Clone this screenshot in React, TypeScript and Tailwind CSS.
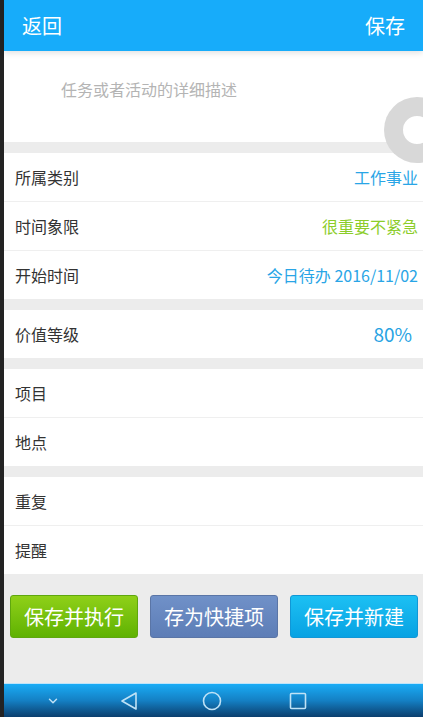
import { ChevronDown } from "lucide-react";

const font = { fontFamily: '"Noto Sans CJK SC", "Noto Sans", sans-serif' };

type Row = { label: string; value?: string; tone?: "blue" | "green" | "big" };

const groups: Row[][] = [
  [
    { label: "所属类别", value: "工作事业", tone: "blue" },
    { label: "时间象限", value: "很重要不紧急", tone: "green" },
    { label: "开始时间", value: "今日待办 2016/11/02", tone: "blue" },
  ],
  [{ label: "价值等级", value: "80%", tone: "big" }],
  [{ label: "项目" }, { label: "地点" }],
  [{ label: "重复" }, { label: "提醒" }],
];

function FormRow({ row, last }: { row: Row; last: boolean }) {
  return (
    <div
      className={`flex items-center justify-between h-[48px] pl-[11px] pr-[5px] ${
        last ? "h-[48px]" : "h-[49px] border-b border-[#efefef]"
      }`}
    >
      <span className="text-[16px] text-[#333]">{row.label}</span>
      {row.value && (
        <span
          className={
            row.tone === "green"
              ? "text-[16px] text-[#8ccd2a]"
              : row.tone === "big"
                ? "text-[19px] text-[#27a3e3] pr-[6px]"
                : "text-[16px] text-[#29a5e6]"
          }
        >
          {row.value}
        </span>
      )}
    </div>
  );
}

export default function App() {
  return (
    <div className="flex w-[423px] h-[717px] overflow-hidden bg-[#ececec]" style={font}>
      <div className="w-[4px] shrink-0 bg-[#232323]" />

      <div className="relative flex-1 flex flex-col">
        {/* Top bar */}
        <div className="flex items-center justify-between h-[51px] bg-[#17acfa] pl-[18px] pr-[18px] text-white text-[20px] z-10 shadow-[0_2px_6px_rgba(0,0,0,0.12)]">
          <span>返回</span>
          <span>保存</span>
        </div>

        {/* Description */}
        <div className="h-[91px] bg-white pl-[57px] pt-[26px] text-[16px] text-[#b4b4b4]">
          任务或者活动的详细描述
        </div>

        {groups.map((g, gi) => (
          <div key={gi} className="mt-[11px] bg-white">
            {g.map((r, ri) => (
              <FormRow key={r.label} row={r} last={ri === g.length - 1} />
            ))}
          </div>
        ))}

        {/* Buttons */}
        <div className="flex gap-[12px] pl-[6px] pr-[5px] pt-[21px]">
          <button className="flex-1 h-[43px] rounded-[3px] border border-[#5fa70e] bg-gradient-to-b from-[#8fd018] to-[#5fb202] text-white text-[20px]">
            保存并执行
          </button>
          <button className="flex-1 h-[43px] rounded-[3px] border border-[#5a75a6] bg-gradient-to-b from-[#7091c8] to-[#5d7db6] text-white text-[20px]">
            存为快捷项
          </button>
          <button className="flex-1 h-[43px] rounded-[3px] border border-[#1197d6] bg-gradient-to-b from-[#1cc0f3] to-[#07a2e3] text-white text-[20px]">
            保存并新建
          </button>
        </div>

        <div className="flex-1" />

        {/* Android nav bar */}
        <div className="h-[34px] bg-gradient-to-b from-[#1aacf6] via-[#1480c4] to-[#0b3f6e] border-t border-[#bfe4fa] flex items-center text-[#bfe2f6]">
          <div className="w-[98px] flex justify-center">
            <ChevronDown size={14} strokeWidth={2.5} />
          </div>
          <div className="w-[54px] flex justify-center">
            <svg width="18" height="20" viewBox="0 0 18 20" fill="none" stroke="currentColor" strokeWidth="1.6">
              <path d="M16 2 L2 10 L16 18 Z" strokeLinejoin="round" />
            </svg>
          </div>
          <div className="w-[112px] flex justify-center">
            <svg width="20" height="20" viewBox="0 0 20 20" fill="none" stroke="currentColor" strokeWidth="1.6">
              <circle cx="10" cy="10" r="8.5" />
            </svg>
          </div>
          <div className="w-[60px] flex justify-center">
            <svg width="18" height="18" viewBox="0 0 18 18" fill="none" stroke="currentColor" strokeWidth="1.6">
              <rect x="1.5" y="1.5" width="15" height="15" rx="1" />
            </svg>
          </div>
        </div>

        {/* Floating ring */}
        <div className="absolute left-[380px] top-[97px] w-[66px] h-[66px] rounded-full border-[19px] border-[#d6d6d6]/95 bg-white z-20" />
      </div>
    </div>
  );
}
